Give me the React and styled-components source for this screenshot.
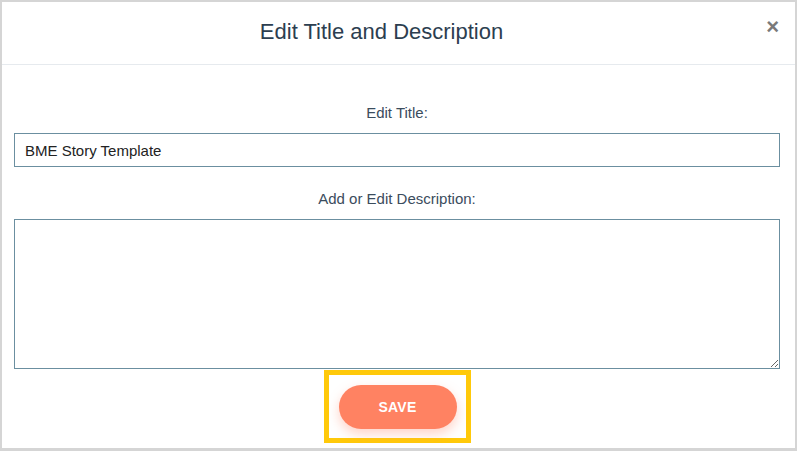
import React from "react";
import styled, { createGlobalStyle } from "styled-components";

const GlobalStyle = createGlobalStyle`
  html, body {
    margin: 0;
    padding: 0;
    background: #ffffff;
  }
  body {
    font-family: "Liberation Sans", Arial, sans-serif;
  }
`;

export default function App() {
  return (
    <>
      <GlobalStyle />
      <StyledFrame>
        <StyledHeader>
          <StyledTitle>Edit Title and Description</StyledTitle>
          <StyledClose type="button" aria-label="Close">
            ×
          </StyledClose>
        </StyledHeader>
        <StyledBody>
          <StyledLabel htmlFor="title">Edit Title:</StyledLabel>
          <StyledInput id="title" defaultValue="BME Story Template" />
          <StyledLabel htmlFor="desc" $gap="24px">
            Add or Edit Description:
          </StyledLabel>
          <StyledTextarea id="desc" />
          <StyledHighlight>
            <StyledSaveButton type="button">SAVE</StyledSaveButton>
          </StyledHighlight>
        </StyledBody>
      </StyledFrame>
    </>
  );
}

const StyledFrame = styled.div`
  box-sizing: border-box;
  width: 797px;
  height: 451px;
  border: 2px solid #d5d5d5;
  border-bottom-width: 3px;
  background: #ffffff;
  overflow: hidden;
  display: flex;
  flex-direction: column;
`;

const StyledHeader = styled.header`
  position: relative;
  height: 62px;
  flex-shrink: 0;
  border-bottom: 1px solid #e6eaee;
  display: flex;
  align-items: center;
  justify-content: center;
`;

const StyledTitle = styled.h1`
  margin: 0 34px 0 0;
  padding-bottom: 3px;
  font-size: 22px;
  font-weight: normal;
  color: #2c3e50;
`;

const StyledClose = styled.button`
  position: absolute;
  top: 14px;
  right: 16px;
  border: none;
  background: none;
  padding: 0;
  font-family: "Liberation Sans", Arial, sans-serif;
  font-size: 22px;
  font-weight: bold;
  line-height: 22px;
  color: #7a7a7a;
  cursor: pointer;
`;

const StyledBody = styled.div`
  display: flex;
  flex-direction: column;
  align-items: stretch;
  padding: 0 15px 0 12px;
`;

const StyledLabel = styled.label`
  margin-top: ${(props) => props.$gap || "40px"};
  margin-bottom: 12px;
  text-align: center;
  font-size: 15px;
  line-height: 16px;
  color: #3b4c5d;
`;

const StyledInput = styled.input`
  box-sizing: border-box;
  height: 34px;
  border: 1px solid #6b8fa0;
  padding: 0 10px;
  font-family: "Liberation Sans", Arial, sans-serif;
  font-size: 15px;
  color: #222222;
  outline: none;
`;

const StyledTextarea = styled.textarea`
  box-sizing: border-box;
  height: 150px;
  border: 1px solid #6b8fa0;
  padding: 8px 10px;
  font-family: "Liberation Sans", Arial, sans-serif;
  font-size: 15px;
  outline: none;
  display: block;
`;

const StyledHighlight = styled.div`
  align-self: center;
  margin-top: 1px;
  border: 5px solid #ffc90a;
  padding: 10px 9px 9px 10px;
  display: flex;
`;

const StyledSaveButton = styled.button`
  width: 118px;
  height: 44px;
  border: none;
  border-radius: 22px;
  background-color: #ff8262;
  color: #ffffff;
  font-family: "Liberation Sans", Arial, sans-serif;
  font-size: 14px;
  font-weight: bold;
  letter-spacing: 0.2px;
  box-shadow: 0 5px 12px rgba(255, 130, 98, 0.35);
  cursor: pointer;
`;
